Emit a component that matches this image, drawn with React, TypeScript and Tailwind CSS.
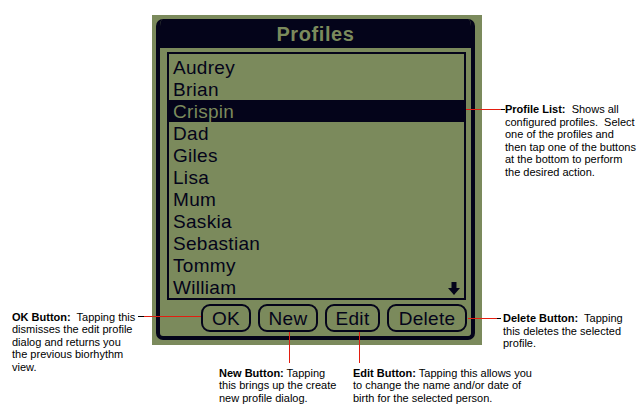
const names = [
  "Audrey",
  "Brian",
  "Crispin",
  "Dad",
  "Giles",
  "Lisa",
  "Mum",
  "Saskia",
  "Sebastian",
  "Tommy",
  "William",
];

const selected = "Crispin";

const DownArrow = () => (
  <svg width="12" height="14" viewBox="0 0 12 14" className="ml-auto mr-[4px] mt-[4px]">
    <rect x="3.5" y="0" width="5" height="7" fill="#04041a" />
    <polygon points="0,6 12,6 6,13" fill="#04041a" />
  </svg>
);

const PalmButton = ({ label, width }: { label: string; width: string }) => (
  <div
    className={`${width} flex h-[28px] items-center justify-center rounded-[9px] border-2 border-[#04041a] text-[19px] leading-none tracking-[0.3px] text-[#04041a]`}
  >
    {label}
  </div>
);

const ProfilesDialog = () => {
  return (
    <div className="h-[330px] w-[330px] bg-[#7b8a5c] pl-[4px] pt-[4px] font-['Liberation_Sans',Arial,sans-serif]">
      <div className="flex h-[321px] w-[319px] flex-col overflow-hidden rounded-[7px] border-x-[4px] border-b-[4px] border-[#04041a]">
        <div className="flex h-[29px] shrink-0 items-center justify-center bg-[#04041a] text-[20px] font-bold tracking-[0.6px] text-[#7b8a5c]">
          Profiles
        </div>

        <ul className="ml-[7px] mt-[4px] h-[248px] w-[299px] border-2 border-[#04041a] pt-[2px]">
          {names.map((name) => (
            <li
              key={name}
              className={
                name === selected
                  ? "flex h-[22px] items-center bg-[#04041a] pl-[4px] text-[19px] leading-none tracking-[0.3px] text-[#7b8a5c]"
                  : "flex h-[22px] items-center pl-[4px] text-[19px] leading-none tracking-[0.3px] text-[#04041a]"
              }
            >
              {name}
              {name === "William" && <DownArrow />}
            </li>
          ))}
        </ul>

        <div className="ml-[41px] mt-[4px] flex gap-[7px]">
          <PalmButton label="OK" width="w-[50px]" />
          <PalmButton label="New" width="w-[60px]" />
          <PalmButton label="Edit" width="w-[55px]" />
          <PalmButton label="Delete" width="w-[80px]" />
        </div>
      </div>
    </div>
  );
};

const Note = ({ label, lines }: { label: string; lines: string[] }) => (
  <div className="whitespace-pre text-[11px] leading-[12.5px] text-black">
    <div>
      <b>{label}</b>
      {lines[0]}
    </div>
    {lines.slice(1).map((l) => (
      <div key={l}>{l}</div>
    ))}
  </div>
);

export default function App() {
  return (
    <div className="relative h-[420px] w-[640px] overflow-hidden bg-white pl-[152px] pt-[15px] font-['Liberation_Sans',Arial,sans-serif]">
      <ProfilesDialog />

      {/* profile list callout */}
      <div className="absolute left-[466px] top-[103px] flex">
        <div className="flex h-[12.5px] w-[39px] items-center">
          <div className="h-px w-[35px] bg-[#e31e10]" />
          <div className="h-px w-[4px] bg-black" />
        </div>
        <Note
          label="Profile List:"
          lines={[
            "  Shows all",
            "configured profiles.  Select",
            "one of the profiles and",
            "then tap one of the buttons",
            "at the bottom to perform",
            "the desired action.",
          ]}
        />
      </div>

      {/* ok callout */}
      <div className="absolute left-[12px] top-[310.5px] flex">
        <div className="w-[126px]">
          <Note
            label="OK Button:"
            lines={[
              "  Tapping this",
              "dismisses the edit profile",
              "dialog and returns you",
              "the previous biorhythm",
              "view.",
            ]}
          />
        </div>
        <div className="flex h-[12.5px] w-[63px] items-center">
          <div className="h-px w-[6px] bg-black" />
          <div className="h-px w-[57px] bg-[#e31e10]" />
        </div>
      </div>

      {/* delete callout */}
      <div className="absolute left-[468px] top-[312px] flex">
        <div className="flex h-[12.5px] w-[35px] items-center">
          <div className="h-px w-[29px] bg-[#e31e10]" />
          <div className="h-px w-[4px] bg-black" />
        </div>
        <Note
          label="Delete Button:"
          lines={["  Tapping", "this deletes the selected", "profile."]}
        />
      </div>

      {/* new callout */}
      <div className="absolute left-[289px] top-[332px] h-[31px] w-px bg-[#e31e10]" />
      <div className="absolute left-[219px] top-[366.5px]">
        <Note
          label="New Button:"
          lines={[" Tapping", "this brings up the create", "new profile dialog."]}
        />
      </div>

      {/* edit callout */}
      <div className="absolute left-[359px] top-[332px] h-[31px] w-px bg-[#e31e10]" />
      <div className="absolute left-[353px] top-[366.5px]">
        <Note
          label="Edit Button:"
          lines={[
            " Tapping this allows you",
            "to change the name and/or date of",
            "birth for the selected person.",
          ]}
        />
      </div>
    </div>
  );
}
